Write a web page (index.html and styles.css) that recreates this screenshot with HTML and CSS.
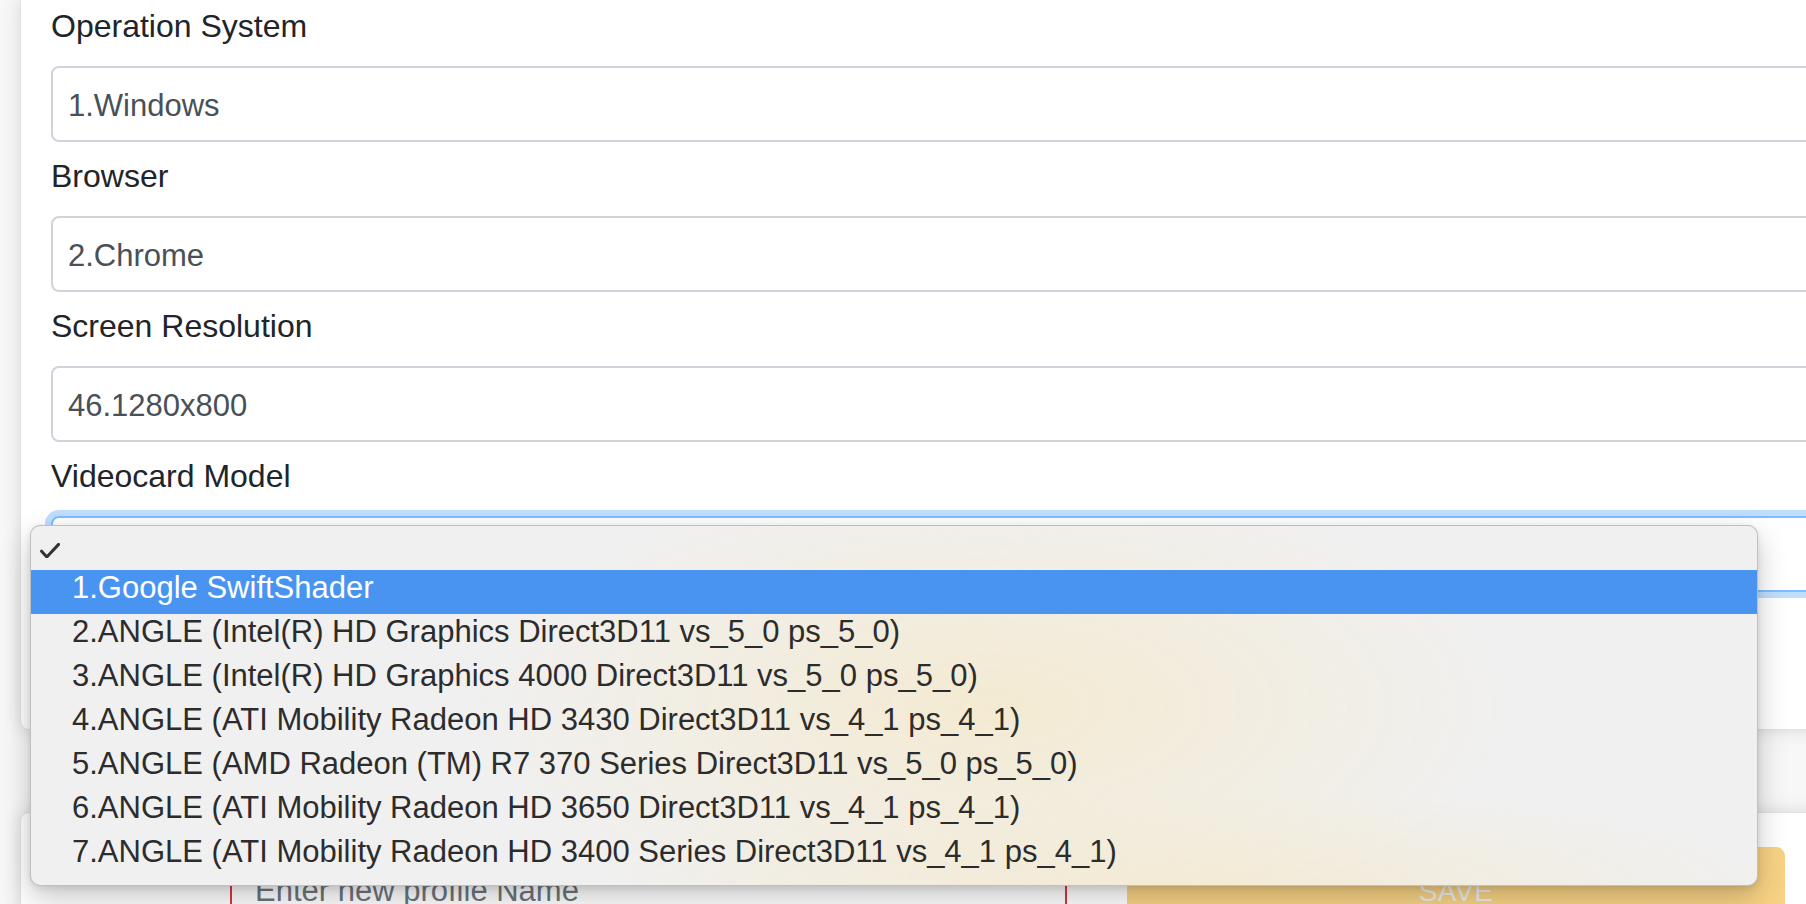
FILE: index.html
```html
<!DOCTYPE html>
<html lang="en">
<head>
    <meta charset="UTF-8">
    <meta name="viewport" content="width=device-width, initial-scale=1.0">
    <title>Profile Settings</title>
    <link rel="stylesheet" href="styles.css">
</head>
<body>
    <div class="page">
        <div class="card settings">
            <div class="group">
                <label class="label">Operation System</label>
                <div class="field">1.Windows</div>
            </div>
            <div class="group">
                <label class="label">Browser</label>
                <div class="field">2.Chrome</div>
            </div>
            <div class="group">
                <label class="label">Screen Resolution</label>
                <div class="field">46.1280x800</div>
            </div>
            <div class="group">
                <label class="label">Videocard Model</label>
                <div class="field focused"></div>
            </div>
        </div>

        <div class="card profile">
            <div class="profile-row">
                <div class="field invalid placeholder">Enter new profile Name</div>
                <button class="btn-save">SAVE</button>
            </div>
        </div>

        <!-- native select popup, open over the videocard field -->
        <ul class="popup">
            <li class="opt checked">
                <svg class="check" width="20" height="15" viewBox="0 0 20 15">
                    <path d="M1.6 8.2 L6.8 14 L18.6 1.4" fill="none" stroke="#333" stroke-width="3" stroke-linecap="round" stroke-linejoin="round"/>
                </svg>
            </li>
            <li class="opt hover">1.Google SwiftShader</li>
            <li class="opt">2.ANGLE (Intel(R) HD Graphics Direct3D11 vs_5_0 ps_5_0)</li>
            <li class="opt">3.ANGLE (Intel(R) HD Graphics 4000 Direct3D11 vs_5_0 ps_5_0)</li>
            <li class="opt">4.ANGLE (ATI Mobility Radeon HD 3430 Direct3D11 vs_4_1 ps_4_1)</li>
            <li class="opt">5.ANGLE (AMD Radeon (TM) R7 370 Series Direct3D11 vs_5_0 ps_5_0)</li>
            <li class="opt">6.ANGLE (ATI Mobility Radeon HD 3650 Direct3D11 vs_4_1 ps_4_1)</li>
            <li class="opt">7.ANGLE (ATI Mobility Radeon HD 3400 Series Direct3D11 vs_4_1 ps_4_1)</li>
        </ul>
    </div>
</body>
</html>
```

FILE: styles.css
```css
html, body {
    margin: 0;
    height: 904px;
    overflow: hidden;
}
body {
    background: #f7f7f7;
    font-family: "Liberation Sans", Arial, sans-serif;
    color: #212529;
}
.page {
    position: relative;
    width: 1806px;
    height: 904px;
    overflow: hidden;
}
.card {
    background: #fff;
    width: 1860px;
    margin-left: 20px;
    box-sizing: border-box;
    border: 1px solid #e2e2e2;
    box-shadow: 0 0 18px rgba(0, 0, 0, 0.13);
}
.settings {
    border-top: none;
    border-radius: 0 0 9px 9px;
    padding: 2px 0 137px 30px;
    display: flex;
    flex-direction: column;
    gap: 10px;
}
.group {
    display: flex;
    flex-direction: column;
}
.label {
    font-size: 32px;
    line-height: 48px;
    margin-bottom: 16px;
}
.field {
    height: 76px;
    box-sizing: border-box;
    border: 2px solid #ced4da;
    border-radius: 8px;
    background: #fff;
    padding: 3px 0 0 15px;
    display: flex;
    align-items: center;
    font-size: 31px;
    color: #495057;
}
.field.focused {
    border-color: #80bdff;
    box-shadow: 0 0 0 6px rgba(0, 123, 255, 0.25);
}
.profile {
    margin-top: 82px;
    border-radius: 9px 9px 0 0;
    padding: 34px 0 40px 209px;
}
.profile-row {
    display: grid;
    grid-template-columns: 837px 658px;
    column-gap: 60px;
    align-items: start;
}
.field.invalid {
    margin-top: 4px;
    border-color: #dc3545;
    padding-left: 23px;
}
.field.placeholder {
    color: #6c757d;
}
.btn-save {
    height: 90px;
    border: none;
    border-radius: 9px;
    background: #f8d385;
    color: #eceeef;
    font-family: "Liberation Sans", Arial, sans-serif;
    font-size: 28px;
    letter-spacing: 0.5px;
    padding: 0;
}

/* popup menu */
.popup {
    position: absolute;
    left: 30px;
    top: 525px;
    width: 1728px;
    height: 361px;
    box-sizing: border-box;
    margin: 0;
    padding: 0 0 7px;
    list-style: none;
    border: 1px solid rgba(0, 0, 0, 0.2);
    border-radius: 10px;
    box-shadow: 0 12px 30px rgba(0, 0, 0, 0.22), 0 2px 6px rgba(0, 0, 0, 0.1);
    background:
        radial-gradient(ellipse 520px 230px at 960px 180px, rgba(244, 234, 208, 0.95), rgba(240, 240, 240, 0)),
        radial-gradient(ellipse 600px 100px at 1150px 360px, rgba(244, 234, 210, 0.9), rgba(240, 240, 240, 0)),
        #f0f0f0;
    overflow: hidden;
}
.opt {
    position: relative;
    height: 44px;
    line-height: 36px;
    padding-left: 41px;
    font-size: 31px;
    color: #2c2c2c;
    white-space: nowrap;
}
.opt.hover {
    background: #4a94f1;
    color: #fff;
}
.check {
    position: absolute;
    left: 9px;
    top: 17px;
}
```
